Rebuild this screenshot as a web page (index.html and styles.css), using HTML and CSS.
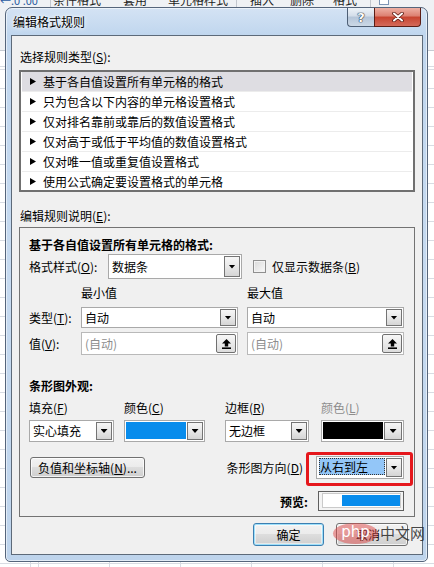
FILE: index.html
```html
<!DOCTYPE html>
<html lang="zh-CN">
<head>
<meta charset="utf-8">
<title>编辑格式规则</title>
<link rel="stylesheet" href="styles.css">
</head>
<body>
<div class="desk">
  <div class="ribbon">
    <div class="rb-row">
      <span class="rb-num">←.0 .00</span>
      <span class="rb-sep sep1"></span>
      <span class="rb-t t1">条件格式</span>
      <span class="rb-t t2">套用</span>
      <span class="rb-t t3">单元格样式</span>
      <span class="rb-sep sep2"></span>
      <span class="rb-t t4">插入</span>
      <span class="rb-t t5">删除</span>
      <span class="rb-t t6">格式</span>
      <span class="rb-sep sep3"></span>
      <span class="rb-icon"></span>
    </div>
  </div>
  <div class="sheet"></div>

  <div class="window">
    <div class="titlebar">
      <span class="title">编辑格式规则</span>
      <div class="caps">
        <span class="cap help">?</span>
        <span class="cap close">
          <svg width="12" height="10" viewBox="0 0 12 10">
            <path d="M2 1.5 L10 8.5 M10 1.5 L2 8.5" stroke="#5a1a12" stroke-width="3.6" stroke-linecap="round" fill="none"/>
            <path d="M2 1.5 L10 8.5 M10 1.5 L2 8.5" stroke="#ffffff" stroke-width="2" stroke-linecap="round" fill="none"/>
          </svg>
        </span>
      </div>
    </div>
    <div class="client">
      <div class="lbl sec1">选择规则类型(<u>S</u>):</div>
      <ul class="rule-list">
        <li class="sel"><i class="tri"></i>基于各自值设置所有单元格的格式</li>
        <li><i class="tri"></i>只为包含以下内容的单元格设置格式</li>
        <li><i class="tri"></i>仅对排名靠前或靠后的数值设置格式</li>
        <li><i class="tri"></i>仅对高于或低于平均值的数值设置格式</li>
        <li><i class="tri"></i>仅对唯一值或重复值设置格式</li>
        <li><i class="tri"></i>使用公式确定要设置格式的单元格</li>
      </ul>
      <div class="lbl sec2">编辑规则说明(<u>E</u>):</div>
      <div class="group">
        <div class="head">基于各自值设置所有单元格的格式:</div>
        <div class="row rowB">
          <span class="lab-style">格式样式(<u>O</u>):</span>
          <div class="combo cb-style"><span class="ctext">数据条</span><span class="arrow"></span></div>
          <span class="chk"></span>
          <span class="chk-lab">仅显示数据条(<u>B</u>)</span>
        </div>
        <div class="mm rowC">
          <span></span><span>最小值</span><span>最大值</span>
        </div>
        <div class="mm rowD">
          <span>类型(<u>T</u>):</span>
          <div class="combo"><span class="ctext">自动</span><span class="arrow"></span></div>
          <div class="combo"><span class="ctext">自动</span><span class="arrow"></span></div>
        </div>
        <div class="mm rowE">
          <span>值(<u>V</u>):</span>
          <div class="field"><span class="ftext">(自动)</span><span class="upbtn"><svg width="9" height="10" viewBox="0 0 9 10"><path d="M4.5 0 L9 4.5 H6.2 V7.6 H2.8 V4.5 H0 Z" fill="#000"/><rect x="0" y="8.4" width="9" height="1.6" fill="#000"/></svg></span></div>
          <div class="field"><span class="ftext">(自动)</span><span class="upbtn"><svg width="9" height="10" viewBox="0 0 9 10"><path d="M4.5 0 L9 4.5 H6.2 V7.6 H2.8 V4.5 H0 Z" fill="#000"/><rect x="0" y="8.4" width="9" height="1.6" fill="#000"/></svg></span></div>
        </div>
        <div class="head headF">条形图外观:</div>
        <div class="app rowG">
          <span>填充(<u>F</u>)</span><span>颜色(<u>C</u>)</span><span>边框(<u>R</u>)</span><span class="dis">颜色(<u>L</u>)</span>
        </div>
        <div class="app rowH">
          <div class="combo w85"><span class="ctext">实心填充</span><span class="arrow"></span></div>
          <div class="ccombo w81"><span class="swatch blue"></span><span class="arrow"></span></div>
          <div class="combo w84"><span class="ctext">无边框</span><span class="arrow"></span></div>
          <div class="ccombo w83"><span class="swatch black"></span><span class="arrow"></span></div>
        </div>
        <div class="row rowI">
          <button class="btn btn-neg">负值和坐标轴(<u>N</u>)...</button>
          <span class="dir-lab">条形图方向(<u>D</u>)</span>
          <div class="combo dcombo"><span class="ctext"><span class="seltext">从右到左</span></span><span class="arrow"></span></div>
        </div>
        <div class="row rowJ">
          <span class="pv-lab">预览:</span>
          <div class="preview"><div class="pv-in"><span class="pv-bar"></span></div></div>
        </div>
      </div>
      <div class="footer">
        <button class="btn btn-ok">确定</button>
        <button class="btn btn-cancel">取消</button>
      </div>
    </div>
  </div>
  <div class="watermark"><span class="wm-php">php</span><span class="wm-cn">中文网</span></div>
</div>
</body>
</html>
```
FILE: styles.css
```css
* { box-sizing: border-box; }
html, body { margin: 0; padding: 0; }
body {
  font-family: "Noto Sans CJK SC", "Microsoft YaHei", sans-serif;
  font-size: 12px;
  color: #000;
  background: #fff;
}
u { text-decoration: underline; text-underline-offset: 1px; }

.desk {
  position: relative;
  width: 434px;
  height: 567px;
  overflow: hidden;
  background: #fff;
}

/* background excel ribbon */
.ribbon {
  height: 51px;
  background: #eff1f4;
  border-bottom: 1px solid #c6cbd2;
  overflow: hidden;
}
.rb-row {
  display: flex;
  align-items: flex-start;
  margin-top: -8px;
  height: 24px;
  line-height: 16px;
  white-space: nowrap;
  color: #1e1e1e;
}
.rb-num { width: 35px; color: #2a5aa0; font-size: 11px; }
.rb-sep { width: 1px; height: 24px; background: #c3c7ce; }
.sep1 { margin-left: 15px; }
.t1 { margin-left: 2px; }
.t2 { margin-left: 22px; }
.t3 { margin-left: 21px; }
.sep2 { margin-left: 8px; }
.t4 { margin-left: 13px; }
.t5 { margin-left: 16px; }
.t6 { margin-left: 19px; }
.sep3 { margin-left: 13px; }
.rb-icon {
  margin: 3px 0 0 8px;
  width: 10px; height: 10px;
  border: 1px solid #7d95b5;
  background: #fff;
}

.sheet {
  height: 516px;
  background-color: #fff;
  background-image:
    repeating-linear-gradient(to right, #d8dce3 0 1px, transparent 1px 71px),
    repeating-linear-gradient(to bottom, #d8dce3 0 1px, transparent 1px 19px);
  background-position: 38px 0, 0 18px;
}

/* dialog window */
.window {
  position: absolute;
  left: 5px;
  top: 7px;
  width: 423px;
  height: 555px;
  border: 1px solid #55657b;
  border-radius: 7px 7px 5px 5px;
  background: linear-gradient(to bottom, #d4e3f4 0, #c0d6ee 27px, #c6daf0 50%, #bed4ec 100%);
  box-shadow: inset 0 0 0 1px rgba(255,255,255,.55);
  padding: 0 4px 6px 5px;
  display: flex;
  flex-direction: column;
}
.titlebar {
  height: 27px;
  flex-shrink: 0;
  display: flex;
  align-items: flex-start;
}
.title {
  margin: 6px 0 0 2px;
  line-height: 16px;
  text-shadow: 0 0 6px #fff, 0 0 3px #fff;
}
.caps {
  margin-left: auto;
  margin-right: 2px;
  display: flex;
}
.cap {
  height: 19px;
  display: flex;
  align-items: center;
  justify-content: center;
  border: 1px solid #4e5f75;
  border-top: none;
}
.help {
  width: 27px;
  border-right: none;
  border-radius: 0 0 0 4px;
  background: linear-gradient(to bottom, #eef3f8 0, #d3dde9 45%, #b5c5d8 50%, #cbd8e6 100%);
  color: #fff;
  font-family: "DejaVu Sans", sans-serif;
  font-weight: bold;
  font-size: 13px;
  text-shadow: 0 0 1px #1d2a3b, 0 0 1px #1d2a3b, 0 0 1px #1d2a3b;
}
.close {
  width: 47px;
  border-color: #5b1d15;
  border-radius: 0 0 4px 0;
  background: linear-gradient(to bottom, #eeb0a4 0, #dc7f70 45%, #c7432f 50%, #d46a5a 100%);
}

.client {
  flex: 1;
  background: #f0f0f0;
  border: 1px solid #5d6a79;
}
.lbl { line-height: 16px; padding-left: 8px; }
.sec1 { margin-top: 13px; }
.sec2 { margin-top: 16px; }

.rule-list {
  list-style: none;
  margin: 5px 0 0 7px;
  width: 396px;
  height: 122px;
  overflow: hidden;
  border: 2px solid #707070;
  background: #fff;
  padding: 0 1px;
}
.rule-list li {
  height: 20px;
  border-bottom: 1px solid #ececec;
  padding-left: 8px;
  display: flex;
  align-items: center;
  white-space: nowrap;
}
.rule-list li.sel { background: #dedde2; }
.tri {
  width: 6px;
  height: 7px;
  background: #000;
  clip-path: polygon(0 0, 100% 50%, 0 100%);
  margin-right: 7px;
}

/* group box */
.group {
  margin: 3px 0 0 7px;
  width: 396px;
  border: 1px solid #737373;
  padding: 9px 10px 5px 9px;
}
.head { font-weight: bold; line-height: 16px; white-space: nowrap; }
.headF { margin-top: 23px; }
.row { display: flex; align-items: center; white-space: nowrap; }

.rowB { height: 25px; margin-top: 1px; }
.lab-style { width: 79px; flex: none; }
.cb-style { width: 134px; height: 25px; }
.chk {
  width: 13px;
  height: 13px;
  margin-left: 11px;
  border: 1px solid #8f8f8f;
  background: linear-gradient(135deg, #d9d9d9, #f9f9f9);
  box-shadow: inset 0 0 0 1px #f2f2f2;
}
.chk-lab { margin-left: 6px; }

.mm {
  display: grid;
  grid-template-columns: 43px 157px 157px;
  column-gap: 9px;
  align-items: center;
  white-space: nowrap;
}
.rowC { height: 16px; margin-top: 6px; line-height: 16px; }
.rowD { height: 21px; margin-top: 6px; }
.rowD .combo { height: 21px; }
.rowE { height: 23px; margin-top: 4px; }

.combo {
  display: flex;
  background: #fff;
  border: 1px solid #a9a9a9;
  padding: 1px;
}
.ctext {
  flex: 1;
  display: flex;
  align-items: center;
  padding-left: 2px;
  white-space: nowrap;
  overflow: hidden;
  line-height: 16px;
}
.arrow {
  flex: 0 0 16px;
  border: 1px solid #747474;
  background: linear-gradient(to bottom, #f6f6f6 0, #e8e8e8 50%, #d5d5d5 100%);
  display: flex;
  align-items: center;
  justify-content: center;
}
.arrow::before {
  content: "";
  width: 7px;
  height: 4px;
  background: #000;
  clip-path: polygon(0 0, 100% 0, 50% 100%);
}

.field {
  display: flex;
  height: 23px;
  background: #fff;
  border: 1px solid #b9b9b9;
  padding: 1px;
}
.ftext {
  flex: 1;
  display: flex;
  align-items: center;
  padding-left: 2px;
  color: #8d8d8d;
}
.upbtn {
  flex: 0 0 20px;
  border: 1px solid #707070;
  border-radius: 2px;
  background: linear-gradient(to bottom, #f7f7f7, #dcdcdc);
  display: flex;
  align-items: center;
  justify-content: center;
}

.app {
  display: grid;
  grid-template-columns: 95px 101px 96px 83px;
  align-items: center;
  white-space: nowrap;
}
.rowG { height: 16px; margin-top: 6px; line-height: 16px; }
.dis { color: #8d8d8d; }
.rowH { height: 22px; margin-top: 4px; }
.rowH > div { height: 22px; }
.w85 { width: 85px; }
.w81 { width: 81px; }
.w84 { width: 84px; }
.w83 { width: 83px; }
.ccombo {
  display: flex;
  background: #fff;
  border: 1px solid #a9a9a9;
  padding: 1px;
}
.swatch { width: 60px; margin: 0 1px 1px 0; }
.swatch.blue { background: #088cec; }
.swatch.black { background: #000; }
.ccombo .arrow { flex: 1; }

.rowI { height: 23px; margin-top: 14px; }
.btn {
  font: inherit;
  color: #000;
  padding: 0;
  border: 1px solid #707070;
  border-radius: 3px;
  background: linear-gradient(to bottom, #f2f2f2 0, #ebebeb 50%, #dddddd 50%, #cfcfcf 100%);
  box-shadow: inset 0 0 0 1px rgba(255,255,255,.75);
  white-space: nowrap;
}
.btn-neg { width: 115px; height: 21px; margin-left: 1px; line-height: 17px; }
.dir-lab { margin-left: auto; margin-right: 13px; }
.dcombo { width: 88px; height: 23px; position: relative; }
.dcombo .ctext { padding: 0 1px 2px 1px; align-items: stretch; }
.seltext {
  flex: 1;
  display: flex;
  align-items: center;
  padding-left: 1px;
  background: #93c6f8;
  outline: 1px dotted #333;
  outline-offset: -1px;
}
.dcombo::after {
  content: "";
  position: absolute;
  top: -5px;
  bottom: -8px;
  left: -11px;
  right: -10px;
  border: 3px solid #e5171c;
  border-radius: 3px;
}

.rowJ { height: 20px; margin-top: 12px; justify-content: flex-end; }
.pv-lab { font-weight: bold; margin-right: 10px; }
.preview {
  width: 86px;
  height: 20px;
  border: 1px solid #5f5f5f;
  padding: 1px 2px 2px 3px;
  background: #f4f4f4;
}
.pv-in {
  height: 100%;
  border: 1px solid #cacaca;
  background: #fff;
  display: flex;
  justify-content: flex-end;
  padding: 1px 0;
}
.pv-bar { width: 58px; background: #088cec; }

.footer {
  display: flex;
  justify-content: flex-end;
  gap: 12px;
  margin-top: 6px;
  padding-right: 14px;
}
.btn-ok, .btn-cancel { height: 23px; line-height: 19px; }
.btn-ok {
  width: 71px;
  border-color: #3c7fb1;
  box-shadow: inset 0 0 0 1px #9ee0fb, inset 0 0 0 2px rgba(255,255,255,.5);
}
.btn-cancel { width: 72px; padding-right: 8px; }

/* watermark overlay */
.watermark {
  position: absolute;
  left: 333px;
  top: 522px;
  display: flex;
  align-items: center;
  height: 22px;
}
.wm-php {
  width: 45px;
  height: 21px;
  border-radius: 50%;
  background: rgba(222, 70, 70, 0.5);
  color: #fff;
  font-family: "DejaVu Sans", sans-serif;
  font-size: 15px;
  line-height: 19px;
  text-align: center;
}
.wm-cn {
  margin-left: 2px;
  font-size: 15px;
  line-height: 20px;
  color: rgba(40, 40, 40, 0.85);
}
```
